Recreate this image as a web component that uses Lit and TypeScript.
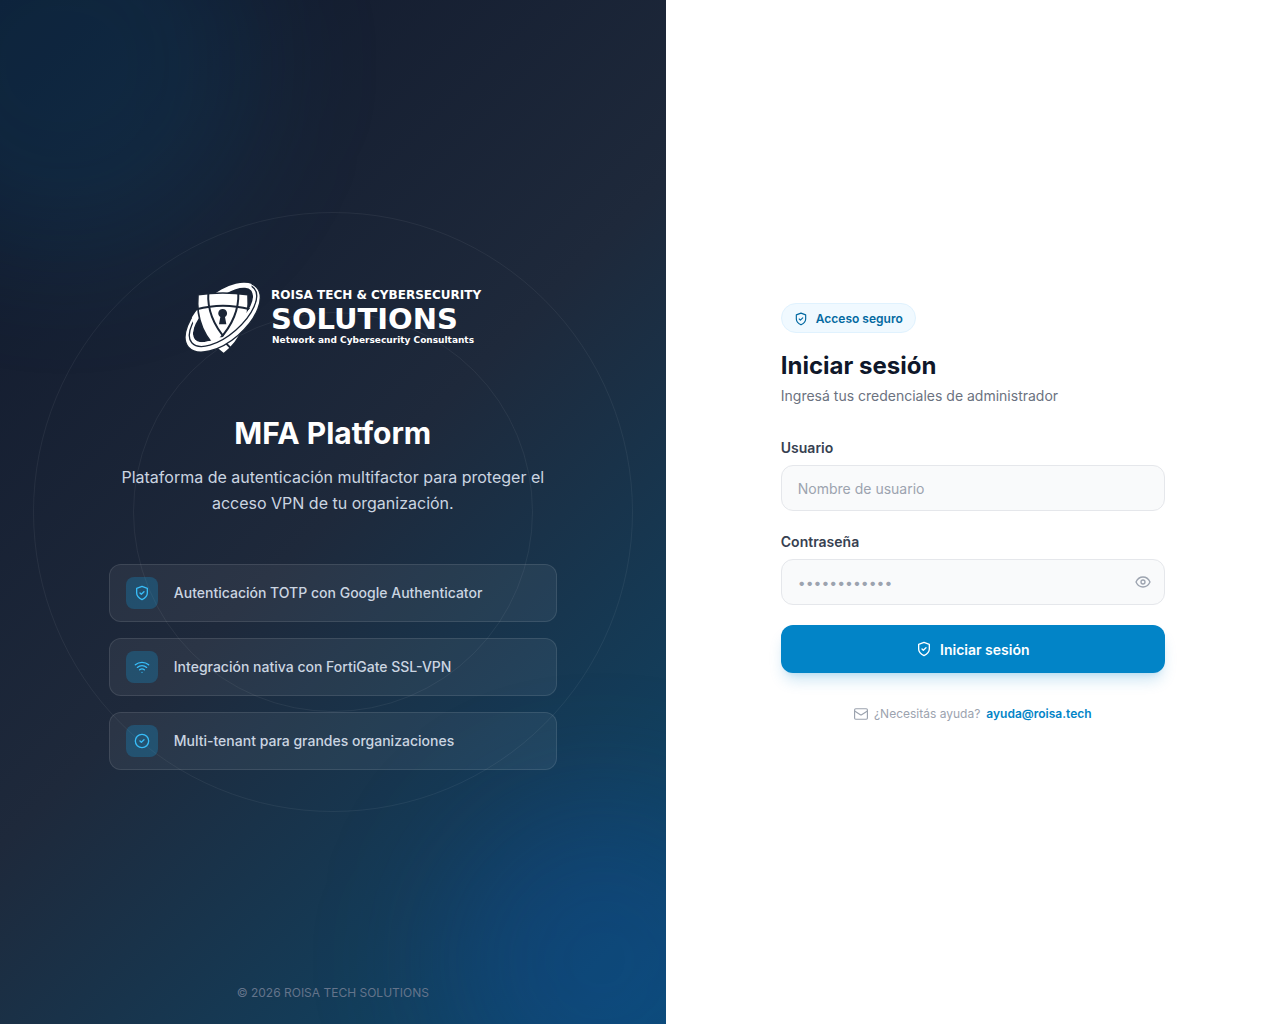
import { LitElement, html, css, svg } from "lit";
import { customElement, state } from "lit/decorators.js";

const shield = svg`<path d="M12 22s8-4 8-10V5l-8-3-8 3v7c0 6 8 10 8 10z"/><path d="m9 12 2 2 4-4"/>`;
const wifi = svg`<path d="M2 8.8a15 15 0 0 1 20 0"/><path d="M5 12.6a10.5 10.5 0 0 1 14 0"/><path d="M8.5 16.2a5.6 5.6 0 0 1 7 0"/><path d="M12 20h.01"/>`;
const check = svg`<circle cx="12" cy="12" r="10"/><path d="m9 12 2 2 4-4"/>`;
const eye = svg`<path d="M1.500 12s3.500-7.500 10.500-7.500 10.500 7.500 10.500 7.500-3.500 7.500-10.500 7.500S1.500 12 1.500 12z"/><circle cx="12" cy="12" r="3"/>`;
const mail = svg`<rect x="1" y="3" width="22" height="18" rx="2"/><path d="m23 7-9.900 6.200a2 2 0 0 1-2.200 0L1 7"/>`;

const icon = (shape: unknown, cls: string) => html`<svg class="icon ${cls}" viewBox="0 0 24 24" aria-hidden="true">${shape}</svg>`;

const features = [
  { shape: shield, text: "Autenticación TOTP con Google Authenticator" },
  { shape: wifi, text: "Integración nativa con FortiGate SSL-VPN" },
  { shape: check, text: "Multi-tenant para grandes organizaciones" },
];

@customElement("brand-logo")
class BrandLogo extends LitElement {
  static styles = css`
    :host { display: block; }
    .logo { display: block; width: 300px; max-width: 100%; height: 128px; overflow: visible; }
    .word { fill: #fff; font-family: "DejaVu Sans", sans-serif; font-weight: 700; }
    .top { font-size: 12px; }
    .main { font-size: 29px; }
    .tag { font-size: 9px; }
  `;
  render() {
    return html`
      <svg class="logo" viewBox="0 0 300 128" role="img" aria-label="Roisa Tech & Cybersecurity Solutions">
        <svg x="-7" y="20" width="100" height="90" viewBox="0 0 300 270">
          <defs>
            <mask id="ring">
              <rect width="300" height="270" fill="#fff"/>
              <ellipse cx="141" cy="123" rx="112" ry="48" transform="rotate(-41 141 123)" fill="#000"/>
            </mask>
            <clipPath id="front"><path d="M225 20 H300 V270 H0 V130 L48 130 L60 190 L140 190 L232 92z"/></clipPath>
          </defs>
          <g mask="url(#ring)">
            <ellipse cx="140" cy="130" rx="136" ry="71" transform="rotate(-41 140 130)" fill="#fff"/>
          </g>
          <path d="M66 62 Q140 52 216 62 Q224 175 143 240 Q56 175 66 62z" fill="#fff" stroke="#1a2536" stroke-width="5"/>
          <g fill="none" stroke="#1a2536" stroke-width="6">
            <path d="M62 106 Q140 84 222 106"/>
            <path d="M97 56 Q92 130 150 196"/>
            <path d="M187 56 Q190 130 130 196"/>
            <path d="M150 208 L172 230"/>
          </g>
          <g clip-path="url(#front)">
            <g mask="url(#ring)">
              <ellipse cx="140" cy="130" rx="136" ry="71" transform="rotate(-41 140 130)" fill="#fff" stroke="#1a2536" stroke-width="4"/>
            </g>
            <ellipse cx="141" cy="125" rx="124" ry="58" transform="rotate(-41 141 125)" fill="none" stroke="#1a2536" stroke-width="4"/>
          </g>
          <path d="M140 105a13 13 0 0 1 7 24l4 22h-22l4-22a13 13 0 0 1 7-24z" fill="#1a2536"/>
        </svg>
        <text class="word top" x="88" y="45">ROISA TECH &amp; CYBERSECURITY</text>
        <text class="word main" x="88" y="75">SOLUTIONS</text>
        <text class="word tag" x="89" y="89">Network and Cybersecurity Consultants</text>
      </svg>
    `;
  }
}

@customElement("app-root")
class AppRoot extends LitElement {
  @state() private visible = false;

  static styles = css`
    :host { display: block; font-family: Inter, sans-serif; color: #0f172a; }
    * { box-sizing: border-box; margin: 0; }
    .page { display: grid; grid-template-columns: 52fr 48fr; min-height: 100vh; }
    .brand { position: relative; overflow: hidden; display: flex; flex-direction: column; align-items: center; justify-content: center; padding: 48px; background: linear-gradient(135deg, #0f172a 0%, #1e293b 50%, #0c4a6e 100%); }
    .glow { position: absolute; border-radius: 50%; filter: blur(64px); }
    .glow-a { width: 384px; height: 384px; left: -128px; top: -128px; background: rgb(2 132 199 / 0.12); }
    .glow-b { width: 320px; height: 320px; right: -96px; bottom: -96px; background: rgb(14 80 190 / 0.22); }
    .orbit { position: absolute; left: 50%; top: 50%; transform: translate(-50%, -50%); border: 1px solid rgb(255 255 255 / 0.06); border-radius: 50%; }
    .orbit-l { width: 600px; height: 600px; }
    .orbit-s { width: 400px; height: 400px; }
    .intro { position: relative; width: 100%; max-width: 448px; display: flex; flex-direction: column; align-items: center; text-align: center; }
    .name { margin-top: 32px; font-size: 30px; line-height: 38px; font-weight: 700; color: #fff; }
    .lead { margin-top: 12px; font-size: 16px; line-height: 26px; color: #cbd5e1; }
    .features { list-style: none; padding: 0; width: 100%; margin-top: 48px; display: grid; gap: 16px; }
    .feature { display: flex; align-items: center; gap: 16px; padding: 12px 16px; border: 1px solid rgb(255 255 255 / 0.1); border-radius: 12px; background: rgb(255 255 255 / 0.06); font-size: 14px; line-height: 20px; font-weight: 500; color: #cbd5e1; }
    .tile { display: grid; place-items: center; width: 32px; height: 32px; border-radius: 8px; background: rgb(14 165 233 / 0.25); color: #38bdf8; }
    .legal { position: absolute; left: 0; right: 0; bottom: 24px; text-align: center; font-size: 12px; line-height: 14px; color: #64748b; }
    .icon { display: block; flex: none; fill: none; stroke: currentColor; stroke-width: 2; stroke-linecap: round; stroke-linejoin: round; }
    .s14 { width: 14px; height: 14px; }
    .s16 { width: 16px; height: 16px; }
    .access { display: flex; align-items: center; justify-content: center; padding: 48px 48px 46px; background: #fff; }
    .panel { width: 100%; max-width: 384px; }
    .badge { display: inline-flex; align-items: center; gap: 8px; height: 30px; padding: 1px 12px 0; border: 1px solid #e0f2fe; border-radius: 15px; background: #f0f9ff; color: #0369a1; font-size: 12px; line-height: 16px; font-weight: 600; vertical-align: top; }
    .title { margin-top: 16px; font-size: 24px; line-height: 34px; font-weight: 700; }
    .sub { margin-top: 4px; font-size: 14px; line-height: 18px; color: #6b7280; }
    .form { display: grid; gap: 20px; margin-top: 32px; }
    .field { display: grid; gap: 6px; }
    .label { font-size: 14px; line-height: 22px; font-weight: 600; color: #374151; }
    .box { display: flex; align-items: center; height: 46px; border: 1px solid #e5e7eb; border-radius: 12px; background: #f9fafb; }
    .box:focus-within { border-color: #0284c7; }
    .input { flex: 1; min-width: 0; height: 100%; padding: 0 16px; border: 0; outline: 0; background: none; font: inherit; font-size: 14px; color: #0f172a; }
    .input::placeholder { color: #9ca3af; opacity: 1; }
    .peek { padding: 0 13px; border: 0; background: none; color: #9ca3af; cursor: pointer; }
    .submit { display: flex; align-items: center; justify-content: center; gap: 8px; height: 48px; border: 0; border-radius: 12px; background: #0284c7; color: #fff; font: inherit; font-size: 14px; font-weight: 600; cursor: pointer; box-shadow: 0 10px 15px -3px rgb(2 132 199 / 0.2), 0 4px 6px -4px rgb(2 132 199 / 0.2); }
    .help { display: flex; align-items: center; justify-content: center; gap: 6px; margin-top: 32px; font-size: 12px; line-height: 18px; color: #9ca3af; }
    .mail { color: #0284c7; font-weight: 600; text-decoration: none; }
  `;

  render() {
    return html`
      <main class="page">
        <section class="brand">
          <div class="glow glow-a"></div>
          <div class="glow glow-b"></div>
          <div class="orbit orbit-l"></div>
          <div class="orbit orbit-s"></div>
          <div class="intro">
            <brand-logo></brand-logo>
            <h1 class="name">MFA Platform</h1>
            <p class="lead">Plataforma de autenticación multifactor para proteger el acceso VPN de tu organización.</p>
            <ul class="features">
              ${features.map((f) => html`<li class="feature"><span class="tile">${icon(f.shape, "s16")}</span>${f.text}</li>`)}
            </ul>
          </div>
          <p class="legal">© 2026 ROISA TECH SOLUTIONS</p>
        </section>
        <section class="access">
          <div class="panel">
            <span class="badge">${icon(shield, "s14")}Acceso seguro</span>
            <h2 class="title">Iniciar sesión</h2>
            <p class="sub">Ingresá tus credenciales de administrador</p>
            <form class="form" @submit=${(e: Event) => e.preventDefault()}>
              <div class="field">
                <label class="label" for="user">Usuario</label>
                <div class="box"><input class="input" id="user" type="text" autocomplete="username" placeholder="Nombre de usuario"></div>
              </div>
              <div class="field">
                <label class="label" for="pass">Contraseña</label>
                <div class="box">
                  <input class="input" id="pass" type=${this.visible ? "text" : "password"} autocomplete="current-password" placeholder="••••••••••••">
                  <button class="peek" type="button" aria-label="Mostrar contraseña" @click=${() => (this.visible = !this.visible)}>${icon(eye, "s16")}</button>
                </div>
              </div>
              <button class="submit" type="submit">${icon(shield, "s16")}Iniciar sesión</button>
            </form>
            <p class="help">${icon(mail, "s14")}<span>¿Necesitás ayuda?</span><a class="mail" href="mailto:ayuda@roisa.tech">ayuda@roisa.tech</a></p>
          </div>
        </section>
      </main>
    `;
  }
}
